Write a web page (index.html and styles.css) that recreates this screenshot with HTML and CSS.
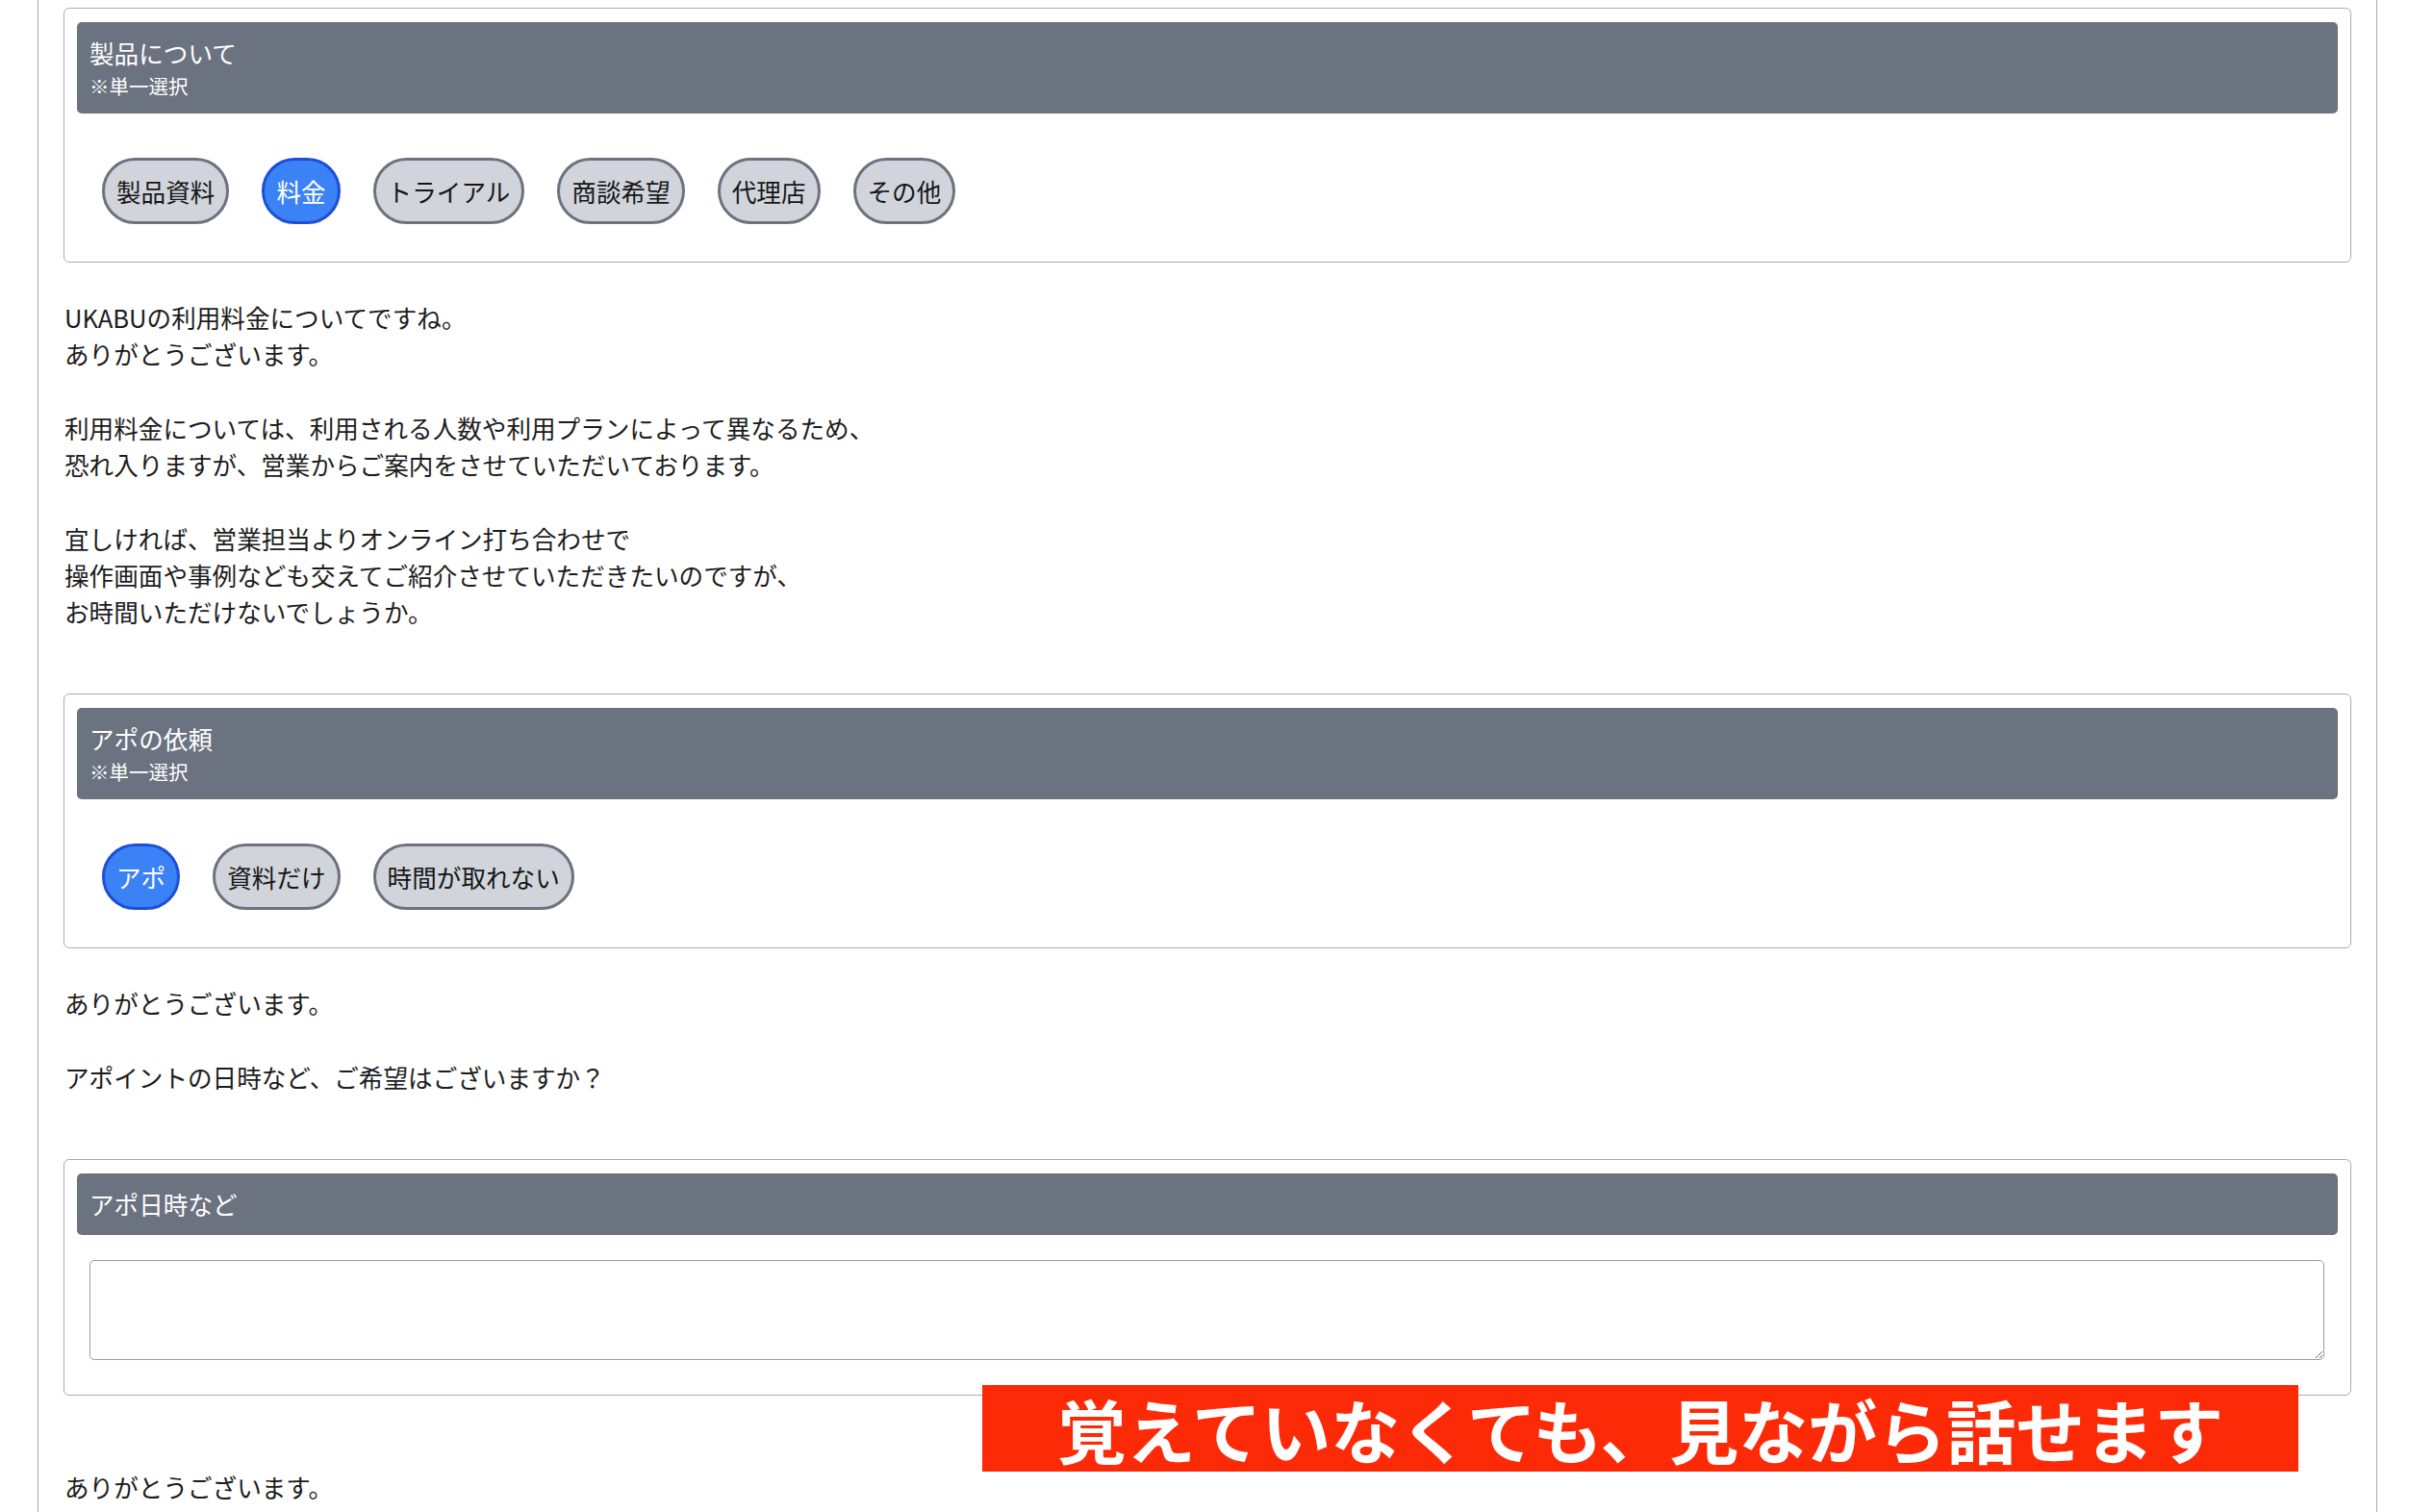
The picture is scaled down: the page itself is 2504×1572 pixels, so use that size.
FILE: index.html
```html
<!DOCTYPE html>
<html lang="ja">
<head>
    <meta charset="utf-8">
    <title>UKABU トークスクリプト</title>
    <link rel="stylesheet" href="styles.css">
</head>
<body>
    <div class="page">
        <div class="card">
            <div class="cardHeader">
                <div class="cardTitle">製品について</div>
                <div class="cardNote">※単一選択</div>
            </div>
            <div class="optionRow">
                <button class="option">製品資料</button>
                <button class="option selected">料金</button>
                <button class="option">トライアル</button>
                <button class="option">商談希望</button>
                <button class="option">代理店</button>
                <button class="option">その他</button>
            </div>
        </div>

        <div class="message">
            UKABUの利用料金についてですね。<br>
            ありがとうございます。<br>
            <br>
            利用料金については、利用される人数や利用プランによって異なるため、<br>
            恐れ入りますが、営業からご案内をさせていただいております。<br>
            <br>
            宜しければ、営業担当よりオンライン打ち合わせで<br>
            操作画面や事例なども交えてご紹介させていただきたいのですが、<br>
            お時間いただけないでしょうか。
        </div>

        <div class="card">
            <div class="cardHeader">
                <div class="cardTitle">アポの依頼</div>
                <div class="cardNote">※単一選択</div>
            </div>
            <div class="optionRow">
                <button class="option selected">アポ</button>
                <button class="option">資料だけ</button>
                <button class="option">時間が取れない</button>
            </div>
        </div>

        <div class="message">
            ありがとうございます。<br>
            <br>
            アポイントの日時など、ご希望はございますか？
        </div>

        <div class="card">
            <div class="cardHeader">
                <div class="cardTitle">アポ日時など</div>
            </div>
            <textarea class="memo"></textarea>
        </div>

        <div class="message spaced">
            ありがとうございます。
        </div>
    </div>

    <div class="caption">覚えていなくても、見ながら話せます</div>
</body>
</html>
```

FILE: styles.css
```css
body {
    margin: 0;
    font-family: "Noto Sans CJK JP", "Noto Sans", sans-serif;
    color: #1c1c1c;
    background-color: #ffffff;
}
.page {
    box-sizing: border-box;
    width: 2432px;
    min-height: 1572px;
    margin-left: 39px;
    padding: 8px 26px 0 26px;
    border-left: 1px solid #a8a8a8;
    border-right: 1px solid #a8a8a8;
}
.card {
    border: 1px solid #acacac;
    border-radius: 6px;
    padding: 14px 13px 0 13px;
}
.cardHeader {
    background-color: #6b7280;
    color: #ffffff;
    border-radius: 5px;
    padding: 13px;
}
.cardTitle {
    font-size: 25.6px;
    line-height: 38px;
}
.cardNote {
    font-size: 20.5px;
    line-height: 31px;
}
.optionRow {
    display: flex;
    gap: 34px;
    padding: 46px 0 39px 26px;
}
.option {
    font-family: inherit;
    font-size: 25.6px;
    line-height: 39px;
    padding: 12px 12px;
    border: 3px solid #6b7280;
    border-radius: 9999px;
    background-color: #d1d5db;
    color: #161616;
    cursor: pointer;
}
.option.selected {
    background-color: #3b82f6;
    border-color: #1d4ed8;
    color: #ffffff;
}
.message {
    font-size: 25.6px;
    line-height: 38.25px;
    margin: 38px 0 66px 1px;
}
.message.spaced {
    margin-top: 76px;
}
.memo {
    display: block;
    box-sizing: border-box;
    width: calc(100% - 27px);
    height: 104px;
    margin: 26px 14px 36px 13px;
    border: 1px solid #9c9c9c;
    border-radius: 5px;
    resize: vertical;
    font-family: inherit;
    font-size: 25.6px;
}
.caption {
    position: absolute;
    left: 1021px;
    top: 1440px;
    width: 1368px;
    height: 90px;
    background-color: #fd2a08;
    color: #ffffff;
    font-size: 72px;
    font-weight: bold;
    line-height: 90px;
    text-align: center;
}
```
